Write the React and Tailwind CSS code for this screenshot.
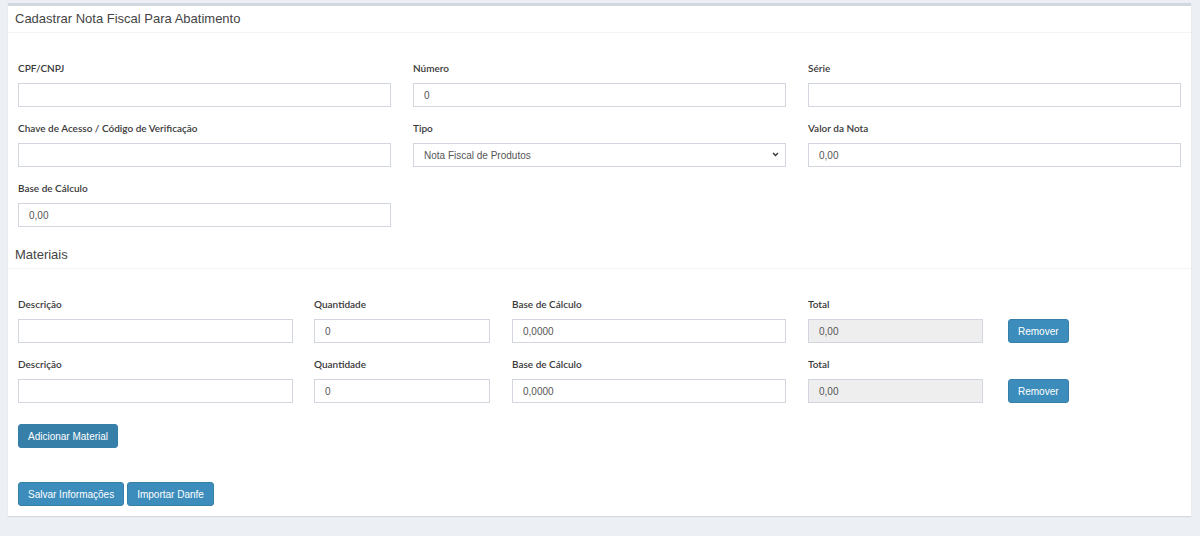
import React from "react";

const lbl = "block text-[10px] font-semibold text-[#3a3a3a] mb-[9px] leading-[12px] [font-family:Lato,'Open_Sans',sans-serif]";
const inp = "block w-full h-[24px] border border-[#d2d6de] bg-white px-[10px] text-[10px] text-[#555] [font-family:'Liberation_Sans',Arial,sans-serif] outline-none";
const inpDis = "block w-full h-[24px] border border-[#d2d6de] bg-[#eeeeee] px-[10px] text-[10px] text-[#555] [font-family:'Liberation_Sans',Arial,sans-serif] outline-none";
const btn = "h-[24px] px-[9px] rounded-[3px] bg-[#3c8dbc] border border-[#367fa9] text-white text-[10px] [font-family:'Liberation_Sans',Arial,sans-serif]";

function Field({ label, value, width, disabled }) {
  return (
    <div className={width}>
      <label className={lbl}>{label}</label>
      <input className={disabled ? inpDis : inp} defaultValue={value} readOnly={disabled} />
    </div>
  );
}

function MatRow() {
  return (
    <div className="flex items-end mb-[15px]">
      <Field label="Descrição" value="" width="w-[275px]" />
      <Field label="Quantidade" value="0" width="w-[176px] ml-[21px]" />
      <Field label="Base de Cálculo" value="0,0000" width="w-[274px] ml-[22px]" />
      <Field label="Total" value="0,00" width="w-[175px] ml-[22px]" disabled />
      <button className={btn + " ml-[25px]"}>Remover</button>
    </div>
  );
}

export default function App() {
  return (
    <div className="w-[1200px] h-[536px] bg-[#ecf0f5] pt-[3px] px-[8px] [font-family:'Liberation_Sans',Arial,sans-serif]">
      <div className="w-[1183px] bg-white border-t-[3px] border-[#d2d6de] shadow-[0_1px_1px_rgba(0,0,0,0.1)] pb-[10px]">
        <div className="h-[27px] border-b border-[#f4f4f4] px-[7px] pt-[5px]">
          <h3 className="text-[13px] leading-[16px] text-[#444]">Cadastrar Nota Fiscal Para Abatimento</h3>
        </div>
        <div className="px-[10px] pt-[29px]">
          <div className="grid grid-cols-[373px_373px_373px] gap-x-[22px] gap-y-[15px]">
            <Field label="CPF/CNPJ" value="" />
            <Field label="Número" value="0" />
            <Field label="Série" value="" />
            <Field label="Chave de Acesso / Código de Verificação" value="" />
            <div>
              <label className={lbl}>Tipo</label>
              <div className="relative">
                <select className={inp + " appearance-none pl-[10px] pr-[20px]"} defaultValue="p">
                  <option value="p">Nota Fiscal de Produtos</option>
                </select>
                <svg className="absolute right-[7px] top-[9px] pointer-events-none" width="7" height="5" viewBox="0 0 7 5">
                  <path d="M1 1 L3.5 3.5 L6 1" fill="none" stroke="#333" strokeWidth="1.3" />
                </svg>
              </div>
            </div>
            <Field label="Valor da Nota" value="0,00" />
            <Field label="Base de Cálculo" value="0,00" />
          </div>
        </div>
        <div className="mt-[15px] h-[27px] border-b border-[#f4f4f4] px-[7px] pt-[5px]">
          <h3 className="text-[13px] leading-[16px] text-[#444]">Materiais</h3>
        </div>
        <div className="px-[10px] pt-[29px]">
          <MatRow />
          <MatRow />
          <button className={btn + " mt-[6px] bg-[#367fa9] border-[#204d74]"}>Adicionar Material</button>
          <div className="flex gap-[3px] mt-[34px]">
            <button className={btn}>Salvar Informações</button>
            <button className={btn}>Importar Danfe</button>
          </div>
        </div>
      </div>
    </div>
  );
}
